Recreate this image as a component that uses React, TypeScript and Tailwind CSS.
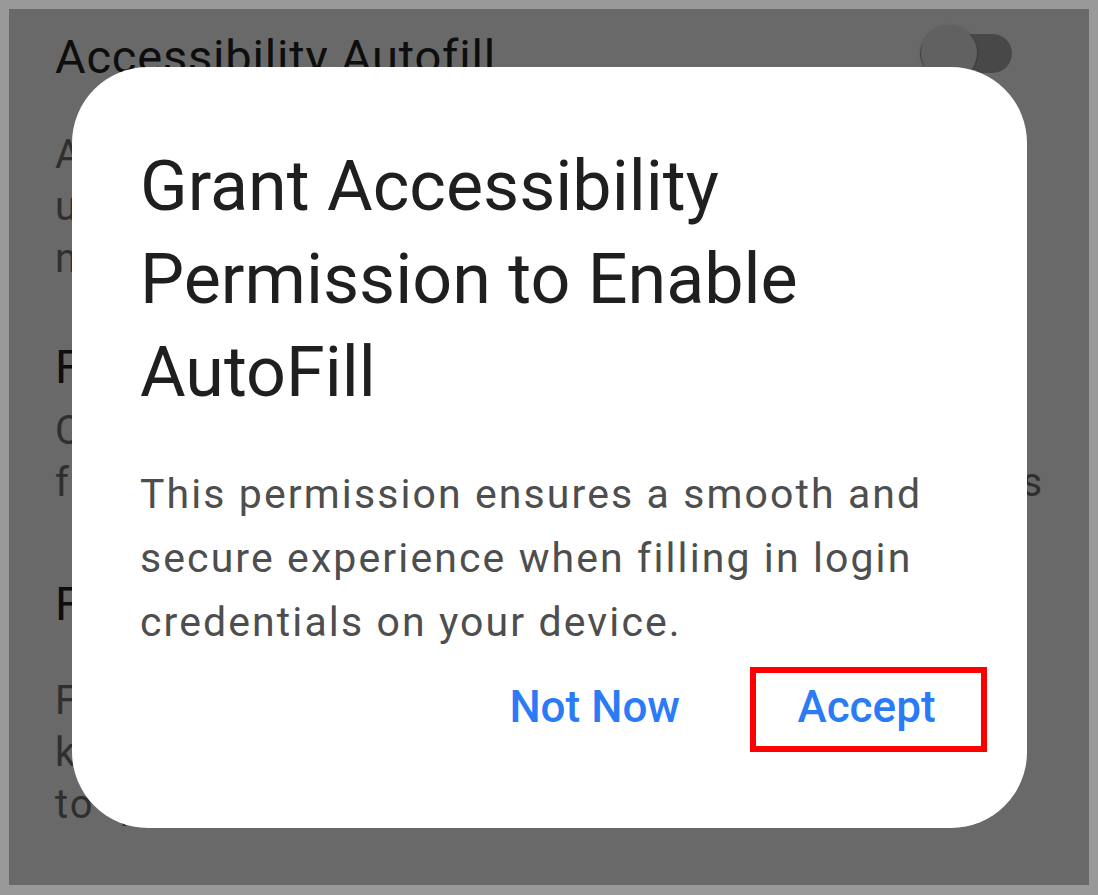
import React from "react";

const Toggle = () => (
  <div className="relative w-[92px] h-[56px] shrink-0">
    <div className="absolute left-0 right-0 top-[9px] h-[39px] rounded-full bg-[#b0b0b0]" />
    <div className="absolute left-[1px] top-0 w-[56px] h-[56px] rounded-full bg-[#ebebeb] shadow-[0_1px_3px_rgba(0,0,0,0.35)]" />
  </div>
);

const SettingsPage = () => (
  <div className="pl-[46px] pr-[40px] pt-[20px]">
    <div className="flex items-start justify-between">
      <h2 className="text-[47px] leading-[56px] tracking-[0.8px] text-[#222]">
        Accessibility Autofill
      </h2>
      <div className="mt-[-4px] mr-[37px]">
        <Toggle />
      </div>
    </div>
    <p className="mt-[44px] text-[40px] leading-[52px] tracking-[2px] text-[#737373] whitespace-nowrap">
      Autofill passwords in apps and browsers
      <br />
      using the accessibility service when the
      <br />
      native autofill service is unavailable.
    </p>
    <h2 className="mt-[54px] text-[47px] leading-[56px] tracking-[0.8px] text-[#222]">
      Fill Suggestions
    </h2>
    <p className="mt-[10px] text-[40px] leading-[52px] tracking-[2px] text-[#737373] whitespace-nowrap">
      Choose which saved credentials appear
      <br />
      first for matching websites and apps, by their tags
    </p>
    <h2 className="mt-[67px] text-[47px] leading-[56px] tracking-[0.8px] text-[#222]">
      Floating Button
    </h2>
    <p className="mt-[43px] text-[40px] leading-[52px] tracking-[2px] text-[#737373] whitespace-nowrap">
      Floating button appears above the
      <br />
      keyboard when a login field is detected
      <br />
      to quickly fill your saved credentials.
    </p>
  </div>
);

const PermissionDialog = () => (
  <div className="absolute left-[63px] top-[58px] w-[955px] h-[761px] rounded-[76px] bg-white pl-[68px] pr-[40px] pt-[73px] flex flex-col">
    <h1 className="text-[70px] leading-[93px] text-[#1f1f1f] whitespace-nowrap">
      Grant Accessibility
      <br />
      Permission to Enable
      <br />
      AutoFill
    </h1>
    <p className="mt-[43px] text-[41px] leading-[64px] tracking-[2.1px] text-[#4e4e4e] whitespace-nowrap">
      This permission ensures a smooth and
      <br />
      secure experience when filling in login
      <br />
      credentials on your device.
    </p>
    <div className="mt-[13px] flex items-center justify-end">
      <button className="mr-[70px] h-[85px] flex items-center pb-[5px] text-[44px] leading-[52px] font-medium text-[#2b7bf7]">
        Not Now
      </button>
      <button className="w-[237px] h-[85px] border-[6px] border-[#ff0000] flex items-center justify-center pb-[5px] pr-[4px] text-[44px] leading-[52px] font-medium text-[#2b7bf7]">
        Accept
      </button>
    </div>
  </div>
);

export default function App() {
  return (
    <div
      className="w-[1098px] h-[895px] bg-[#999999] pt-[9px] pl-[9px] pr-[9px] pb-[10px]"
      style={{ fontFamily: "Roboto, 'Noto Sans', sans-serif" }}
    >
      <div className="relative w-full h-full bg-white overflow-hidden">
        <SettingsPage />
        <div className="absolute inset-0 bg-black/[0.59]" />
        <PermissionDialog />
      </div>
    </div>
  );
}
